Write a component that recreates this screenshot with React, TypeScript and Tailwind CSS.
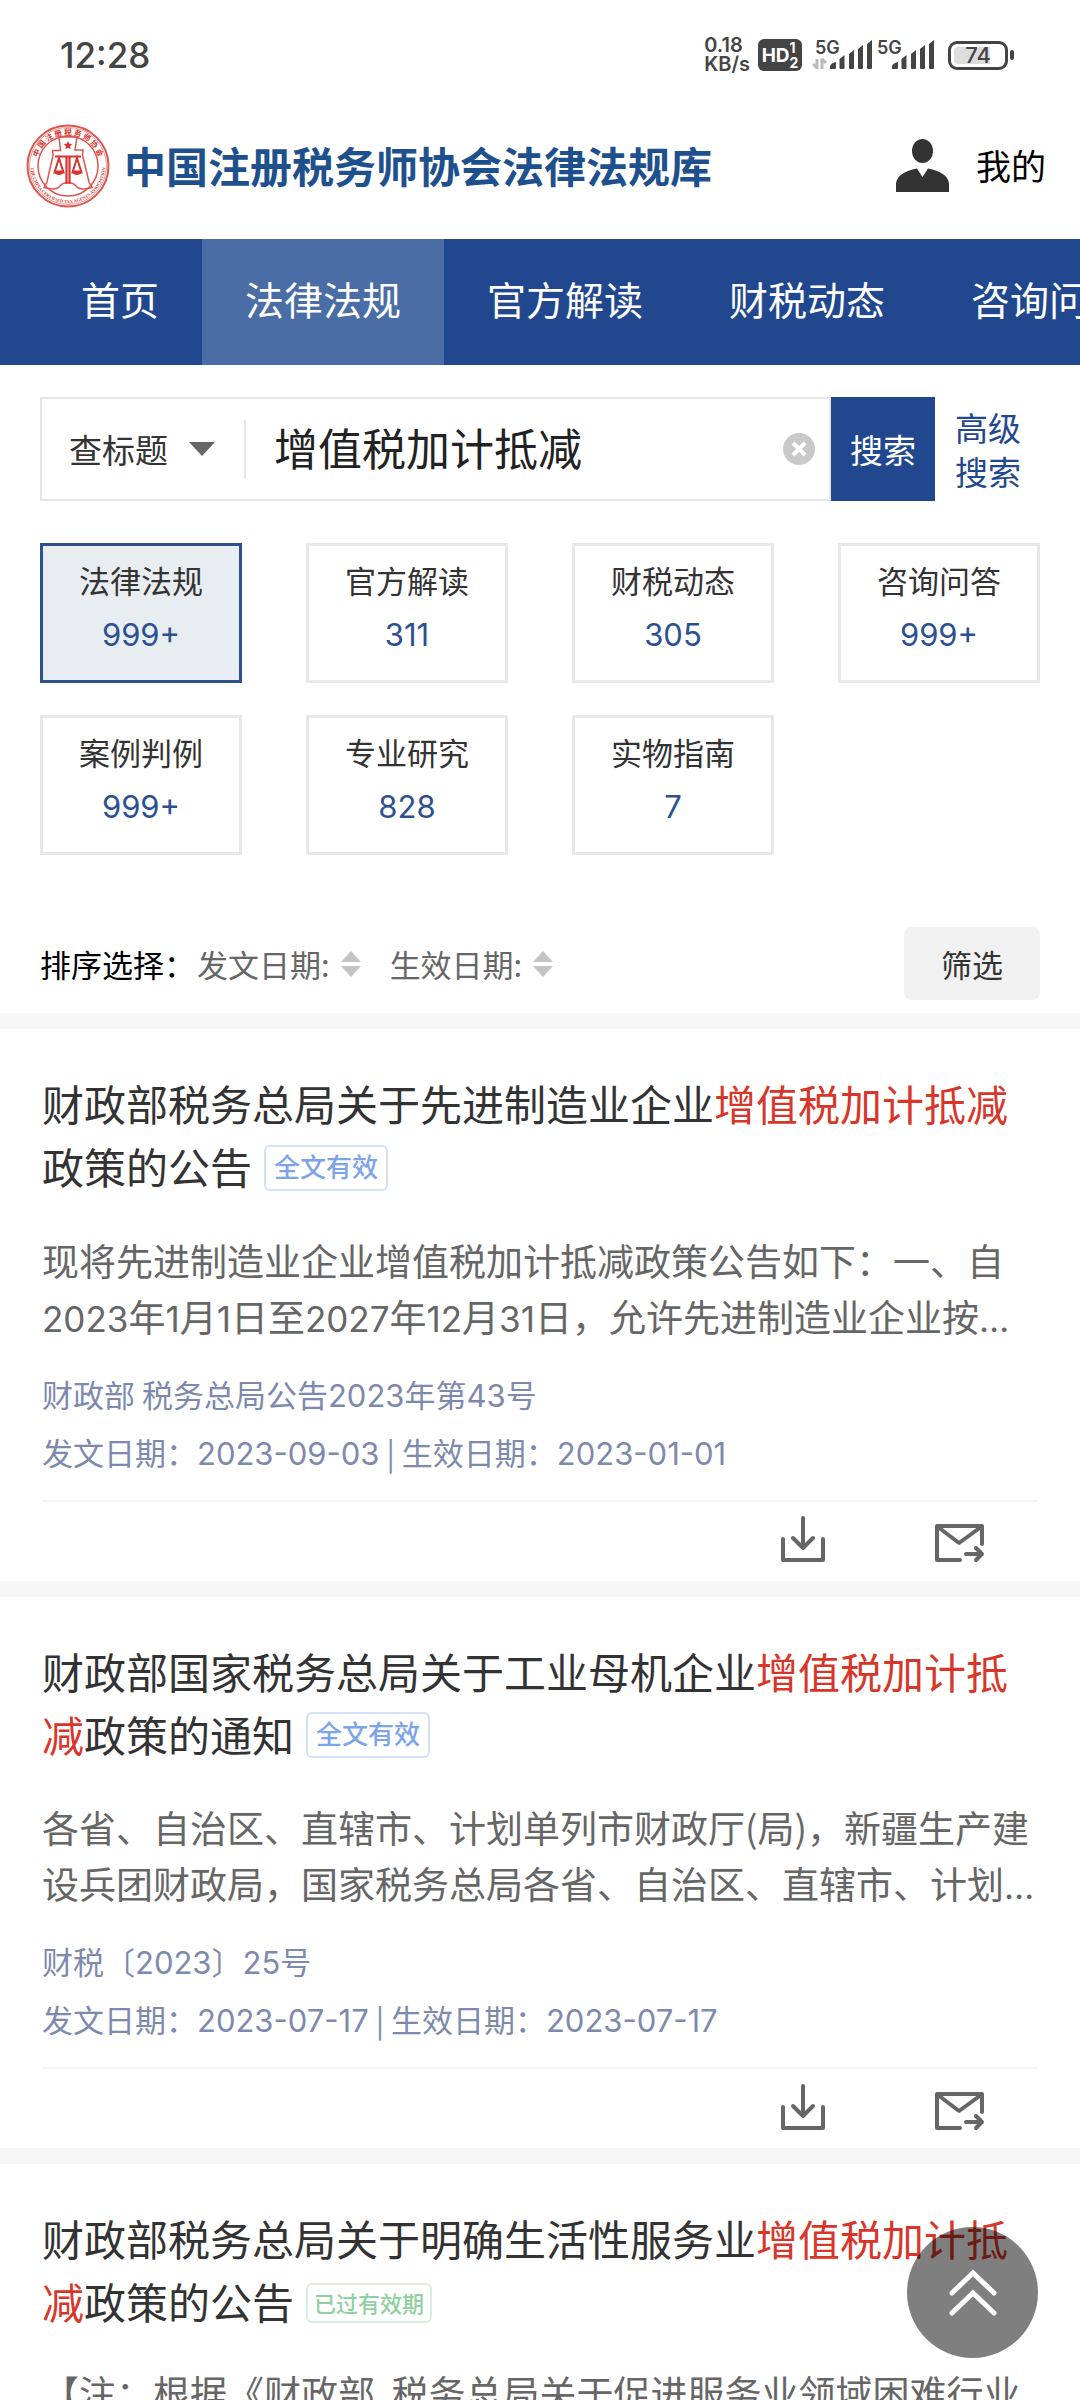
import React from "react";

const NAV_LABELS = ["首页", "法律法规", "官方解读", "财税动态", "咨询问答", "案例判例"];

const CATEGORIES = [
  { name: "法律法规", count: "999+" },
  { name: "官方解读", count: "311" },
  { name: "财税动态", count: "305" },
  { name: "咨询问答", count: "999+" },
  { name: "案例判例", count: "999+" },
  { name: "专业研究", count: "828" },
  { name: "实物指南", count: "7" },
];

type Article = {
  before: string;
  match: string;
  after: string;
  status: "valid" | "expired";
  summary: string;
  doc?: string;
  issued?: string;
  effective?: string;
};

const ARTICLES: Article[] = [
  {
    before: "财政部税务总局关于先进制造业企业",
    match: "增值税加计抵减",
    after: "政策的公告",
    status: "valid",
    summary:
      "现将先进制造业企业增值税加计抵减政策公告如下：一、自2023年1月1日至2027年12月31日，允许先进制造业企业按…",
    doc: "财政部 税务总局公告2023年第43号",
    issued: "2023-09-03",
    effective: "2023-01-01",
  },
  {
    before: "财政部国家税务总局关于工业母机企业",
    match: "增值税加计抵减",
    after: "政策的通知",
    status: "valid",
    summary:
      "各省、自治区、直辖市、计划单列市财政厅(局)，新疆生产建设兵团财政局，国家税务总局各省、自治区、直辖市、计划…",
    doc: "财税〔2023〕25号",
    issued: "2023-07-17",
    effective: "2023-07-17",
  },
  {
    before: "财政部税务总局关于明确生活性服务业",
    match: "增值税加计抵减",
    after: "政策的公告",
    status: "expired",
    summary: "【注：根据《财政部\u00a0 税务总局关于促进服务业领域困难行业",
  },
];

/* Sets digits, dates and the ellipsis in the Latin face. */
function Mixed({ text, large = false }: { text: string; large?: boolean }) {
  return (
    <>
      {text.split(/([0-9-]+|…)/).map((part, i) =>
        i % 2 === 1 ? (
          <span
            key={i}
            className={large ? "font-['Inter'] text-[35px] leading-none" : "font-['Inter'] text-[31px] leading-none"}
          >
            {part}
          </span>
        ) : (
          <React.Fragment key={i}>{part}</React.Fragment>
        )
      )}
    </>
  );
}

function Emblem() {
  return (
    <svg viewBox="0 0 84 84" className="size-[84px] shrink-0" role="img" aria-label="协会会徽">
      <defs>
        <path id="arc-top" d="M 10.5 42 A 31.5 31.5 0 0 1 73.5 42" />
        <path id="arc-bottom" d="M 4.8 42 A 37.200 37.200 0 0 0 79.2 42" />
      </defs>
      <g fill="none" stroke="#e0544f">
        <circle cx="42" cy="42" r="40.5" strokeWidth="2" />
        <circle cx="42" cy="42" r="38.5" strokeWidth="0.6" />
        <circle cx="42" cy="42" r="30" strokeWidth="1.5" />
        <path
          strokeWidth="1.5"
          d="M33 13h18l-2 13h8l-.5 5L63 58l3 5.500Q54 67 50 62q-3-3.500-8-3.500T34 62q-4 5-16 1.500L21 58l6-26.500-.5-5h8z"
        />
      </g>
      <path fill="#d8332e" d="M42 17l1.300 2.700 3 .4-2.200 2 .6 3-2.700-1.400-2.700 1.400.6-3-2.200-2 3-.4z" />
      <g fill="none" stroke="#d8332e" strokeWidth="2.200">
        <path d="M29 32.500h26M40.500 33v27M43.500 33v27" />
        <path strokeWidth="2" d="M33 34l-4.500 14.500h9zM51 34l-4.500 14.500h9z" />
      </g>
      <path fill="#d8332e" d="M28 46.500h10q-1 4.500-5 4.500t-5-4.500zM46 46.500h10q-1 4.500-5 4.500t-5-4.500z" />
      <text fill="#d8332e" fontSize="7.500" fontWeight="700" className="font-['Noto_Sans_CJK_SC']">
        <textPath href="#arc-top" startOffset="50%" textAnchor="middle">
          中 国 注 册 税 务 师 协 会
        </textPath>
      </text>
      <text fill="#d8332e" fontSize="4.500" fontWeight="700" className="font-['Liberation_Serif']">
        <textPath href="#arc-bottom" startOffset="50%" textAnchor="middle">
          THE CHINA CERTIFIED TAX AGENTS ASSOCIATION
        </textPath>
      </text>
    </svg>
  );
}

function Signal({ arrows = false }: { arrows?: boolean }) {
  return (
    <svg viewBox="0 0 62 34" className="h-[34px] w-[62px]" aria-hidden="true">
      <text x="3" y="16" fontSize="18" fontWeight="600" fill="#444" className="font-['Inter']">
        5G
      </text>
      {arrows && <path d="M5 31V21M1 26l4 4M10 20.500V31M10 21l4 4" fill="none" stroke="#bbb" strokeWidth="3" />}
      <g fill="#444">
        <path d="M18 31v-3q1-3 6-4v6q0 1-1 1z" />
        <path d="M27.500 21l5-4v13q0 1-1 1h-3q-1 0-1-1z" />
        <path d="M37 16l5-4v18q0 1-1 1h-3q-1 0-1-1z" />
        <path d="M46 11l5-4v23q0 1-1 1h-3q-1 0-1-1z" />
        <path d="M55 6l5-4v28q0 1-1 1h-3q-1 0-1-1z" />
      </g>
    </svg>
  );
}

function StatusBar() {
  return (
    <div className="flex h-[94px] shrink-0 items-center justify-between pt-4 pr-[66px] pl-[60px] font-['Inter'] text-[#444]">
      <span className="text-[35px] leading-none font-medium">12:28</span>
      <div className="flex items-center">
        <div className="text-[20px] leading-[19px] font-semibold">
          0.18
          <br />
          KB/s
        </div>
        <div className="ml-2 flex h-8 w-[44px] items-center justify-center rounded-md bg-[#444] text-white">
          <span className="text-[19px] leading-none font-bold">HD</span>
          <span className="text-[14px] leading-[15px] font-bold">
            1<br />2
          </span>
        </div>
        <div className="ml-[10px] flex">
          <Signal arrows />
          <Signal />
        </div>
        <div className="ml-3 flex h-[29px] w-[60px] items-center justify-center rounded-[9px] border-3 border-[#444] p-[3px]">
          <div className="flex h-full w-full items-center justify-center rounded-sm bg-linear-to-r from-[#ddd] from-74% to-white to-74% text-[22px] leading-none font-medium">
            74
          </div>
        </div>
        <div className="ml-[2px] h-[10px] w-1 rounded-full bg-[#444]" />
      </div>
    </div>
  );
}

function SortArrows() {
  return (
    <svg viewBox="0 0 20 28" className="h-7 w-5" aria-hidden="true">
      <path d="M10 1l10 11H0zM10 27l10-11H0z" fill="#c4c4c4" />
    </svg>
  );
}

function Badge({ status }: { status: Article["status"] }) {
  return status === "valid" ? (
    <span className="mb-2.5 ml-3 inline-flex h-[46px] items-center rounded-md border-2 border-[#d3e1fa] px-2 pb-1 align-middle text-[26px] leading-none font-medium text-[#7ba4ea]">
      全文有效
    </span>
  ) : (
    <span className="mb-2.5 ml-3 inline-flex h-10 items-center rounded-md border-2 border-[#d9efde] px-1.5 pb-0.5 align-middle text-[22px] leading-none font-medium text-[#8fd19e]">
      已过有效期
    </span>
  );
}

function ArticleCard({ article }: { article: Article }) {
  return (
    <article className="border-t-16 border-[#f7f7f7] bg-white px-[42px] pt-[42px]">
      <h2 className="text-[42px] leading-[63px] text-[#333]">
        <a href="#article">
          {article.before}
          <em className="text-[#d9362a] not-italic">{article.match}</em>
          {article.after}
        </a>
        <Badge status={article.status} />
      </h2>
      <p className="mt-[31px] text-[37px] leading-[56px] text-[#666]">
        <Mixed text={article.summary} large />
      </p>
      {article.doc && article.issued && article.effective && (
        <>
          <div className="mt-[21px] text-[31px] leading-[58px] text-[#7d89ad]">
            <p>
              <Mixed text={article.doc} />
            </p>
            <p>
              <Mixed text={`发文日期：${article.issued}`} /> | <Mixed text={`生效日期：${article.effective}`} />
            </p>
          </div>
          <div className="mt-[19px] flex h-[81px] items-center justify-end gap-[104px] border-t-2 border-[#f5f5f5] pr-[53px] pb-1">
            <button type="button" aria-label="下载">
              <svg
                viewBox="0 0 52 52"
                className="size-[52px]"
                fill="none"
                stroke="#666"
                strokeWidth="4"
                strokeLinecap="round"
                strokeLinejoin="round"
              >
                <path d="M6 26v21h40V26M26 5v30M16 25l10 10 10-10" />
              </svg>
            </button>
            <button type="button" aria-label="发送邮件">
              <svg
                viewBox="0 0 52 52"
                className="size-[52px]"
                fill="none"
                stroke="#666"
                strokeWidth="4"
                strokeLinecap="round"
                strokeLinejoin="round"
              >
                <path d="M27 47H4V13h45v18M5 14l21 16 22-16M33 41h15M43 35l6 6-6 6" />
              </svg>
            </button>
          </div>
        </>
      )}
    </article>
  );
}

export default function App() {
  return (
    <div
      lang="zh-CN"
      className="relative flex h-screen flex-col overflow-hidden bg-white font-['Noto_Sans_CJK_SC',sans-serif] text-black"
    >
      <StatusBar />

      <header className="flex h-[145px] shrink-0 items-center pr-[34px] pb-[2px] pl-[26px]">
        <Emblem />
        <h1 className="ml-[14px] flex-1 pb-[2px] text-[42px] leading-none font-bold whitespace-nowrap text-[#1f508e]">
          中国注册税务师协会法律法规库
        </h1>
        <a href="#me" className="flex items-center gap-[27px] text-[35px] leading-none whitespace-nowrap">
          <svg viewBox="0 0 53 53" className="size-[53px]" fill="#333" aria-hidden="true">
            <ellipse cx="26.500" cy="12" rx="10.500" ry="12" />
            <path d="M0 53V44Q2 33 21 29.500L26.500 38 32 29.500Q51 33 53 44v9z" />
          </svg>
          <span className="pb-[2px]">我的</span>
        </a>
      </header>

      <nav className="flex h-[126px] shrink-0 overflow-hidden bg-[#21478f] pl-[38px] text-[39px] leading-none whitespace-nowrap text-white">
        {NAV_LABELS.map((label, i) => (
          <a
            key={label}
            href="#section"
            aria-current={i === 1 ? "page" : undefined}
            className={
              i === 1
                ? "flex shrink-0 items-center bg-[#4a6da6] px-[43px] pb-2"
                : "flex shrink-0 items-center px-[43px] pb-2"
            }
          >
            {label}
          </a>
        ))}
      </nav>

      <main className="min-h-0 flex-1 overflow-y-auto [scrollbar-width:none]">
        <section className="px-10 pt-8 pb-[13px]">
          <form className="flex h-[104px]" onSubmit={(e) => e.preventDefault()}>
            <div className="flex min-w-0 flex-1 items-center border-2 border-[#e6e6e6] pr-[14px] pl-[27px]">
              <label className="relative flex items-center">
                <select
                  aria-label="搜索范围"
                  className="w-[146px] appearance-none bg-transparent text-[33px] leading-[48px] text-[#333]"
                >
                  <option>查标题</option>
                  <option>查全文</option>
                </select>
                <svg
                  viewBox="0 0 26 14"
                  className="pointer-events-none absolute right-0 h-[14px] w-[26px]"
                  aria-hidden="true"
                >
                  <path d="M0 0h26L13 14z" fill="#666" />
                </svg>
              </label>
              <span className="ml-[29px] h-[58px] w-[2px] bg-[#e6e6e6]" />
              <input
                type="text"
                aria-label="搜索关键词"
                defaultValue="增值税加计抵减"
                className="ml-7 min-w-0 flex-1 bg-transparent pb-1 text-[44px] leading-[64px] text-[#222] outline-none"
              />
              <button type="button" aria-label="清空">
                <svg viewBox="0 0 32 32" className="size-8" aria-hidden="true">
                  <circle cx="16" cy="16" r="16" fill="#c9c9c9" />
                  <path d="M10 10l12 12M22 10L10 22" stroke="#fff" strokeWidth="4" />
                </svg>
              </button>
            </div>
            <button type="submit" className="w-[104px] shrink-0 bg-[#21478f] text-[33px] leading-none text-white">
              搜索
            </button>
            <a
              href="#advanced"
              className="flex w-[105px] shrink-0 items-center pl-5 text-[33px] leading-[44px] text-[#21478f]"
            >
              高级搜索
            </a>
          </form>

          <div className="mt-[42px] grid grid-cols-4 gap-x-16 gap-y-8">
            {CATEGORIES.map((c, i) => (
              <button
                key={c.name}
                type="button"
                className={
                  i === 0
                    ? "flex h-[140px] flex-col items-center border-3 border-[#2c5090] bg-[#e8edf2] pt-2"
                    : "flex h-[140px] flex-col items-center border-3 border-[#e8e8e8] pt-2"
                }
              >
                <span className="text-[31px] leading-[52px] text-[#333]">{c.name}</span>
                <span className="font-['Inter'] text-[31px] leading-[58px] text-[#2c5090]">{c.count}</span>
              </button>
            ))}
          </div>

          <div className="mt-[72px] flex h-[73px] items-center text-[31px] leading-none">
            <span>排序选择：</span>
            <button type="button" className="ml-[2px] flex items-center gap-[11px] text-[#666]">
              发文日期: <SortArrows />
            </button>
            <button type="button" className="ml-[29px] flex items-center gap-[11px] text-[#666]">
              生效日期: <SortArrows />
            </button>
            <button type="button" className="ml-auto h-full w-[136px] rounded-lg bg-[#f1f1f1] text-[#333]">
              筛选
            </button>
          </div>
        </section>

        {ARTICLES.map((a) => (
          <ArticleCard key={a.before} article={a} />
        ))}
      </main>

      <button
        type="button"
        aria-label="返回顶部"
        className="absolute right-[42px] bottom-[42px] flex size-[131px] items-center justify-center rounded-full bg-black/50"
      >
        <svg
          viewBox="0 0 52 52"
          className="size-[52px]"
          fill="none"
          stroke="#fff"
          strokeWidth="5"
          strokeLinecap="round"
          aria-hidden="true"
        >
          <path d="M5 26L26 6l21 20M5 46l21-20 21 20" />
        </svg>
      </button>
    </div>
  );
}
